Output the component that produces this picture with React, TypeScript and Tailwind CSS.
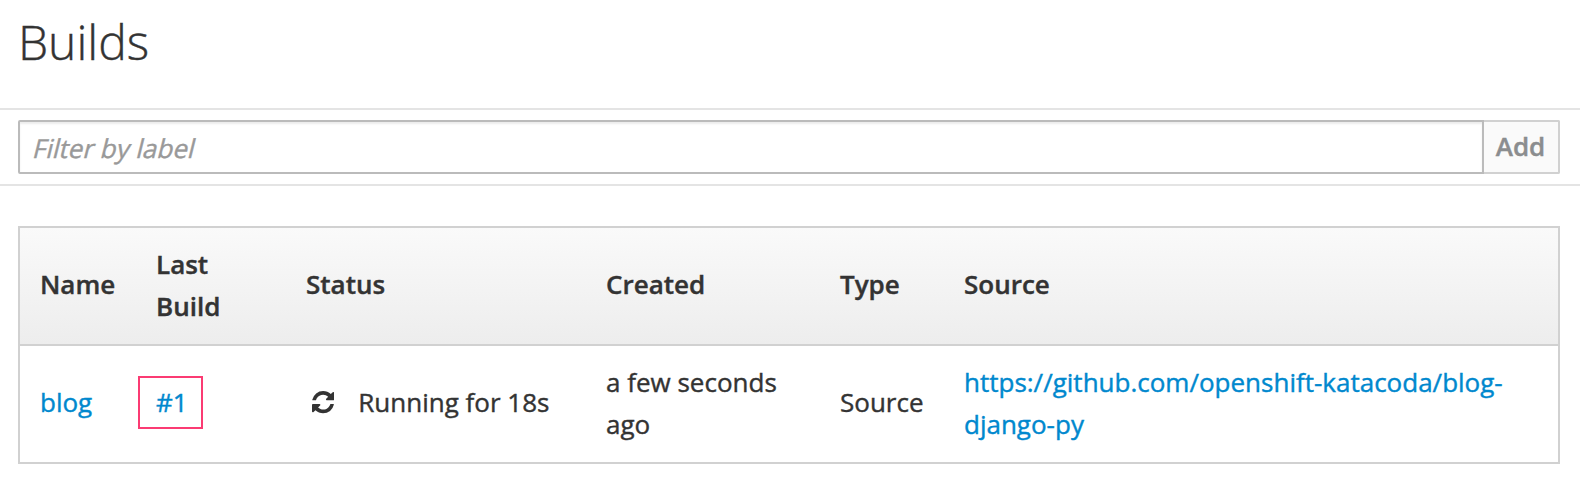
import type { ReactNode } from "react";

const COLUMNS = "grid grid-cols-[116px_150px_300px_234px_124px_1fr] items-center pl-5";

const HEADINGS = [
  { label: "Name", className: "pb-0.5" },
  { label: "Last Build", className: "pr-10" },
  { label: "Status", className: "pb-0.5" },
  { label: "Created", className: "pb-0.5" },
  { label: "Type", className: "pb-0.5" },
  { label: "Source", className: "pb-0.5" },
];

function Link({ children }: { children: ReactNode }) {
  return (
    <a href="#" className="text-[#0088ce]">
      {children}
    </a>
  );
}

function RefreshIcon() {
  return (
    <svg viewBox="0 0 1536 1536" className="size-[22.3px] fill-current" aria-hidden="true">
      <path d="M1511 928q0 5-1 7-64 268-268 434.5T764 1536q-146 0-282.5-55T238 1324l-129 129q-19 19-45 19t-45-19-19-45V960q0-26 19-45t45-19h448q26 0 45 19t19 45-19 45l-137 137q71 66 161 102t187 36q134 0 250-65t186-179q11-17 53-117 8-23 30-23h192q13 0 22.5 9.5t9.5 22.5zm25-800v448q0 26-19 45t-45 19h-448q-26 0-45-19t-19-45 19-45l138-138Q969 256 768 256q-134 0-250 65T332 500q-11 17-53 117-8 23-30 23H50q-13 0-22.5-9.5T18 608v-7q65-268 270-434.5T768 0q146 0 284 55.5T1297 212l130-129q19-19 45-19t45 19 19 45z" />
    </svg>
  );
}

export default function App() {
  return (
    <main className="h-[486px] w-[1580px] overflow-hidden bg-white font-['Open_Sans',sans-serif] text-[26px] leading-[42px] text-[#333] [-webkit-text-stroke:0.4px]">
      <h1 className="h-[108px] pl-[18px] pt-[15px] text-[48px] font-light leading-[53px]">Builds</h1>

      <div className="flex h-[78px] items-center border-y-2 border-[#e4e4e4] pl-[18px] pr-5">
        <div
          role="textbox"
          aria-label="Filter by label"
          tabIndex={0}
          className="flex h-[54px] flex-1 items-center rounded-l-[2px] border-2 border-[#bbb] px-[14px] pt-px shadow-[inset_0_2px_2px_rgba(3,3,3,0.075)] outline-none"
        >
          <span className="inline-block -skew-x-[14deg] text-[#999]">Filter by label</span>
        </div>
        <button className="h-[54px] w-[76px] rounded-r-[2px] border-2 border-l-0 border-[#d1d1d1] bg-[#fafafa] pb-[3px] pr-px text-center font-semibold leading-[42px] text-[#8b8d8f]">
          Add
        </button>
      </div>

      <section className="ml-[18px] mr-5 mt-10 border-2 border-[#d1d1d1]">
        <div className={`${COLUMNS} h-[118px] border-b-2 border-[#d1d1d1] bg-linear-to-b from-[#fafafa] to-[#ededed] pb-[3px] font-semibold`}>
          {HEADINGS.map(({ label, className }) => (
            <div key={label} className={className}>
              {label}
            </div>
          ))}
        </div>
        <div className={`${COLUMNS} h-[116px] pb-[3px]`}>
          <div className="pb-0.5">
            <Link>blog</Link>
          </div>
          <div className="-ml-[18px] flex h-[53px] w-[65px] items-center border-2 border-[#fb3b73] pb-0.5 pl-4">
            <Link>#1</Link>
          </div>
          <div className="flex items-center pl-[5.5px]">
            <RefreshIcon />
            <span className="ml-[24.5px] pb-0.5">Running for 18s</span>
          </div>
          <div className="pr-10">a few seconds ago</div>
          <div className="pb-0.5">Source</div>
          <div className="pr-10">
            <Link>https://github.com/openshift-katacoda/blog-django-py</Link>
          </div>
        </div>
      </section>
    </main>
  );
}
